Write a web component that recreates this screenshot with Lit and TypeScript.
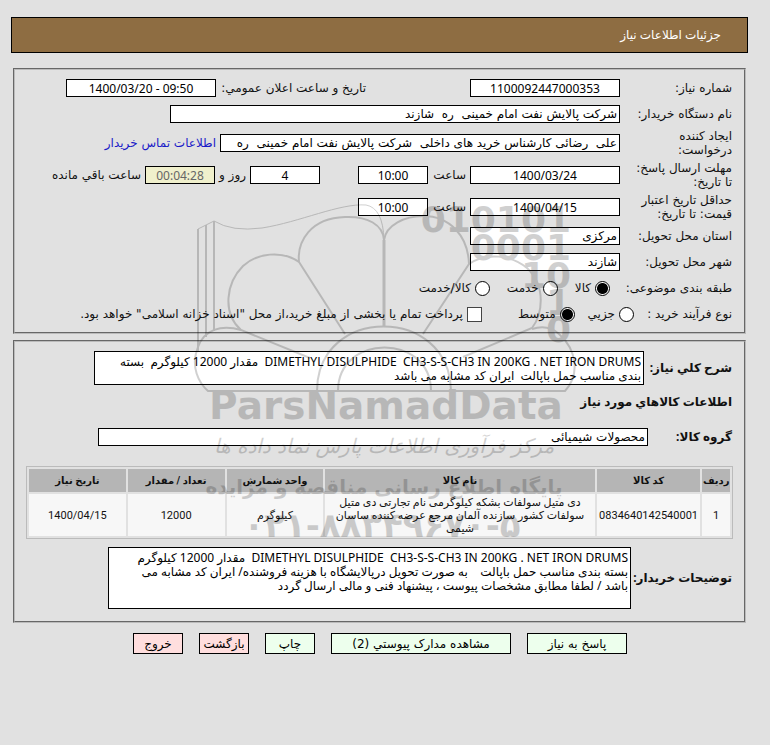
import { LitElement, html, svg, css } from 'lit';
import { customElement } from 'lit/decorators.js';

const flower = svg`
  <g fill="none" stroke="#000" stroke-width="2">
    <path d="M198 229L214 221Q232 232 262 228C300 222 340 203 366 205Q383 208 384 240" stroke-width="1" />
    <path d="M198 229V352M206 225V337M214 221V331" />
    <path d="M384 240V326" stroke-width="3" />
    <path d="M384 240C383 225 368 216 345 217C310 218 297 242 299 262L345 334" />
    <path d="M384 240C386 225 405 216 423 216C450 216 468 236 469 264L423 334" />
    <path d="M299 262C282 250 257 253 243 266C226 283 222 313 241 330L310 358" />
    <path d="M469 264C486 252 511 255 527 268C547 287 542 315 532 328L463 357" />
    <path d="M241 330C221 324 204 330 198 347C190 367 199 383 208 391H565C580 375 577 350 559 334Q548 324 532 329" />
    <path d="M317 391C317 305 450 305 451 391M338 391C338 333 431 333 431 391" />
  </g>
`;

@customElement('pnd-watermark')
export class PndWatermark extends LitElement {
  static styles = css`
    :host {
      display: block;
      pointer-events: none;
      opacity: 0.18;
    }

    svg {
      display: block;
    }

    text {
      font-family: 'DejaVu Sans', sans-serif;
      text-anchor: middle;
    }

    .digits {
      font-size: 36px;
      font-weight: bold;
      text-anchor: end;
    }

    .name {
      font-size: 39px;
      font-weight: bold;
    }

    .center {
      font-size: 20px;
      font-style: italic;
    }

    .base {
      font-size: 20px;
      font-weight: bold;
    }

    .phone {
      font-size: 34px;
      font-weight: bold;
    }
  `;

  protected render() {
    return html`
      <svg width="410" height="350" viewBox="190 195 410 350" aria-hidden="true">
        ${flower}
        <text class="digits" x="571" y="232">010101</text>
        <text class="digits" x="571" y="260">0001</text>
        <text class="digits" x="571" y="288">10</text>
        <text class="digits" x="571" y="315">1</text>
        <text class="digits" x="571" y="342">0</text>
        <text class="name" x="386" y="419">ParsNamadData</text>
        <text class="center" x="384" y="453">مرکز فرآوری اطلاعات پارس نماد داده ها</text>
        <text class="base" x="384" y="494">پایگاه اطلاع رسانی مناقصه و مزایده</text>
        <text class="phone" x="382" y="537">۰۲۱-۸۸۳۴۹۶۷۰-۵</text>
      </svg>
    `;
  }
}

@customElement('app-root')
export class AppRoot extends LitElement {
  static styles = css`
    :host {
      display: block;
      position: relative;
      min-height: 100vh;
      box-sizing: border-box;
      padding: 17px 22px 0 11px;
      background: #e1e1e1;
      color: #111;
      font: 12px/14px 'DejaVu Sans', sans-serif;
    }

    * {
      box-sizing: border-box;
    }

    h1 {
      margin: 0 0 15px;
      padding: 10px 26px;
      border: 1px solid #000;
      background: #8e6d42;
      color: #fff;
      font: 12px/14px 'Noto Sans', 'DejaVu Sans', sans-serif;
    }

    fieldset {
      min-width: 0;
      margin: 0 2px 6px;
      padding: 9px 12px;
      border: 2px groove #bbb;
    }

    input,
    textarea,
    button {
      margin: 0;
      font: inherit;
      color: #000;
      border: 1px solid #000;
      border-radius: 0;
      background: #fff;
    }

    .row {
      display: flex;
      align-items: center;
      gap: 4px;
      min-height: 18px;
      margin-bottom: 8px;
    }

    .row:last-child {
      margin-bottom: 0;
    }

    .tall {
      min-height: 28px;
      margin-top: -2px;
      margin-bottom: 6px;
    }

    .label {
      flex: none;
      width: 108px;
    }

    .field {
      width: 150px;
      height: 18px;
      padding: 0 2px;
      min-width: 0;
    }

    .number {
      font-family: 'Noto Sans', sans-serif;
      text-align: center;
    }

    .short {
      width: 70px;
    }

    .buyer {
      width: 450px;
    }

    .person {
      width: 400px;
    }

    .remaining {
      background: #f0f0cc;
      color: #666;
    }

    .published {
      width: 146px;
      margin-right: 100px;
      white-space: nowrap;
    }

    .hour {
      width: 34px;
    }

    .days {
      margin-right: 34px;
    }

    a {
      color: #1a1ac8;
      text-decoration: none;
    }

    .option {
      display: flex;
      align-items: center;
      gap: 4px;
    }

    .option + .option {
      margin-right: 13px;
    }

    .options .label {
      width: 118px;
    }

    .process .label {
      width: 94px;
    }

    .process .option + .option {
      margin-right: 9px;
    }

    .process .option + .treasury {
      margin-right: 32px;
    }

    .mark {
      appearance: none;
      flex: none;
      width: 15px;
      height: 15px;
      border-radius: 50%;
    }

    .mark:checked {
      background: radial-gradient(#000 5px, #fff 6px);
    }

    .check {
      border-radius: 0;
      border-color: #444;
    }

    .strong,
    .section {
      font: bold 12px/18px 'Noto Sans', 'DejaVu Sans', sans-serif;
      white-space: nowrap;
    }

    .strong {
      flex: none;
    }

    textarea {
      display: block;
      padding: 3px 2px;
      resize: none;
      overflow: hidden;
      font: 12px/14px 'Noto Sans', 'DejaVu Sans', sans-serif;
    }

    .overview .strong {
      width: 84px;
    }

    .summary {
      flex: 0 1 550px;
      height: 34px;
    }

    .notes {
      flex: 0 1 523px;
      height: 62px;
      padding-left: 16px;
    }

    .section {
      margin: 0 0 17px;
    }

    .group .strong {
      width: 80px;
    }

    .group .field {
      flex: 0 1 550px;
    }

    .description {
      padding-bottom: 3px;
    }

    .description .strong {
      width: 97px;
    }

    .goods {
      margin: 0 -1px;
    }

    table {
      width: 100%;
      margin: 20px 0 8px;
      border: 1px solid #bbb;
      border-spacing: 2px;
      font: 11px/13px Roboto, 'DejaVu Sans', sans-serif;
      text-align: center;
      table-layout: fixed;
    }

    th {
      height: 23px;
      padding: 0;
      background: #b5b5b5;
      font-size: 10px;
    }

    td {
      height: 42px;
      padding: 0 1px;
      background: #f7f7f7;
    }

    .serial {
      width: 4%;
    }

    .code {
      width: 15%;
    }

    .title {
      width: 39%;
    }

    .actions {
      display: flex;
      justify-content: center;
      gap: 16px;
      padding-top: 4px;
      margin-left: 1px;
    }

    button {
      width: 50px;
      height: 21px;
      padding: 0;
      background: #edffed;
    }

    .reply {
      width: 100px;
    }

    .files {
      width: 180px;
    }

    .leave {
      background: #ffdede;
    }

    pnd-watermark {
      position: absolute;
      top: 195px;
      left: calc(50% - 195px);
    }
  `;

  protected render() {
    return html`
      <main dir="rtl">
        <h1>جزئیات اطلاعات نیاز</h1>

        <fieldset>
          <div class="row">
            <label class="label" for="number">شماره نیاز:</label>
            <input class="field number" id="number" value="1100092447000353" />
            <label class="published" for="published">تاریخ و ساعت اعلان عمومي:</label>
            <input class="field number" id="published" dir="ltr" value="1400/03/20 - 09:50" />
          </div>
          <div class="row">
            <label class="label" for="buyer">نام دستگاه خریدار:</label>
            <input class="field buyer" id="buyer" value="شرکت پالایش نفت امام خمینی  ره  شازند" />
          </div>
          <div class="row tall">
            <label class="label" for="person">ایجاد کننده<br />درخواست:</label>
            <input
              class="field person"
              id="person"
              value="علی  رضائی کارشناس خرید های داخلی  شرکت پالایش نفت امام خمینی  ره"
            />
            <a href="#contact">اطلاعات تماس خریدار</a>
          </div>
          <div class="row tall">
            <label class="label" for="deadline">مهلت ارسال پاسخ:<br />تا تاریخ:</label>
            <input class="field number" id="deadline" value="1400/03/24" />
            <label class="hour" for="deadline-time">ساعت</label>
            <input class="field number short" id="deadline-time" value="10:00" />
            <input class="field number short days" id="days" value="4" />
            <label for="days">روز و</label>
            <input class="field number short remaining" id="remaining" value="00:04:28" />
            <label for="remaining">ساعت باقي مانده</label>
          </div>
          <div class="row tall">
            <label class="label" for="validity">حداقل تاریخ اعتبار<br />قیمت: تا تاریخ:</label>
            <input class="field number" id="validity" value="1400/04/15" />
            <label class="hour" for="validity-time">ساعت</label>
            <input class="field number short" id="validity-time" value="10:00" />
          </div>
          <div class="row">
            <label class="label" for="province">استان محل تحویل:</label>
            <input class="field" id="province" value="مرکزی" />
          </div>
          <div class="row">
            <label class="label" for="city">شهر محل تحویل:</label>
            <input class="field" id="city" value="شازند" />
          </div>
          <div class="row options">
            <span class="label">طبقه بندی موضوعی:</span>
            <label class="option"><input class="mark" type="radio" name="kind" checked />کالا</label>
            <label class="option"><input class="mark" type="radio" name="kind" />خدمت</label>
            <label class="option"><input class="mark" type="radio" name="kind" />کالا/خدمت</label>
          </div>
          <div class="row process">
            <span class="label">نوع فرآیند خرید :</span>
            <label class="option"><input class="mark" type="radio" name="process" />جزيي</label>
            <label class="option"><input class="mark" type="radio" name="process" checked />متوسط</label>
            <label class="option treasury">
              <input class="mark check" type="checkbox" />
              پرداخت تمام یا بخشی از مبلغ خرید،از محل "اسناد خزانه اسلامی" خواهد بود.
            </label>
          </div>
        </fieldset>

        <fieldset>
          <div class="row overview">
            <label class="strong" for="summary">شرح کلي نیاز:</label>
            <textarea class="summary" id="summary">
DIMETHYL DISULPHIDE  CH3-S-S-CH3 IN 200KG . NET IRON DRUMS  مقدار 12000 کیلوگرم  بسته بندی مناسب حمل باپالت  ایران کد مشابه می باشد</textarea
            >
          </div>
          <h2 class="section">اطلاعات کالاهاي مورد نیاز</h2>
          <div class="row group">
            <label class="strong" for="group">گروه کالا:</label>
            <input class="field" id="group" value="محصولات شیمیائی" />
          </div>
          <div class="goods">
            <table>
              <thead>
                <tr>
                  <th class="serial">ردیف</th>
                  <th class="code">کد کالا</th>
                  <th class="title">نام کالا</th>
                  <th>واحد شمارش</th>
                  <th>تعداد / مقدار</th>
                  <th>تاریخ نیاز</th>
                </tr>
              </thead>
              <tbody>
                <tr>
                  <td>1</td>
                  <td>0834640142540001</td>
                  <td>دی متیل سولفات بشکه کیلوگرمی نام تجارتی دی متیل سولفات کشور سازنده آلمان مرجع عرضه کننده ساسان شیمی</td>
                  <td>کیلوگرم</td>
                  <td>12000</td>
                  <td>1400/04/15</td>
                </tr>
              </tbody>
            </table>
          </div>
          <div class="row description">
            <label class="strong" for="notes">توضیحات خریدار:</label>
            <textarea class="notes" id="notes">
DIMETHYL DISULPHIDE  CH3-S-S-CH3 IN 200KG . NET IRON DRUMS  مقدار 12000 کیلوگرم  بسته بندی مناسب حمل باپالت    به صورت تحویل درپالایشگاه با هزینه فروشنده/ ایران کد مشابه می باشد / لطفا مطابق مشخصات پیوست ، پیشنهاد فنی و مالی ارسال گردد</textarea
            >
          </div>
        </fieldset>

        <div class="actions">
          <button class="reply">پاسخ به نیاز</button>
          <button class="files">مشاهده مدارک پیوستي (2)</button>
          <button>چاپ</button>
          <button class="leave">بازگشت</button>
          <button class="leave">خروج</button>
        </div>
      </main>
      <pnd-watermark></pnd-watermark>
    `;
  }
}

declare global {
  interface HTMLElementTagNameMap {
    'pnd-watermark': PndWatermark;
    'app-root': AppRoot;
  }
}
